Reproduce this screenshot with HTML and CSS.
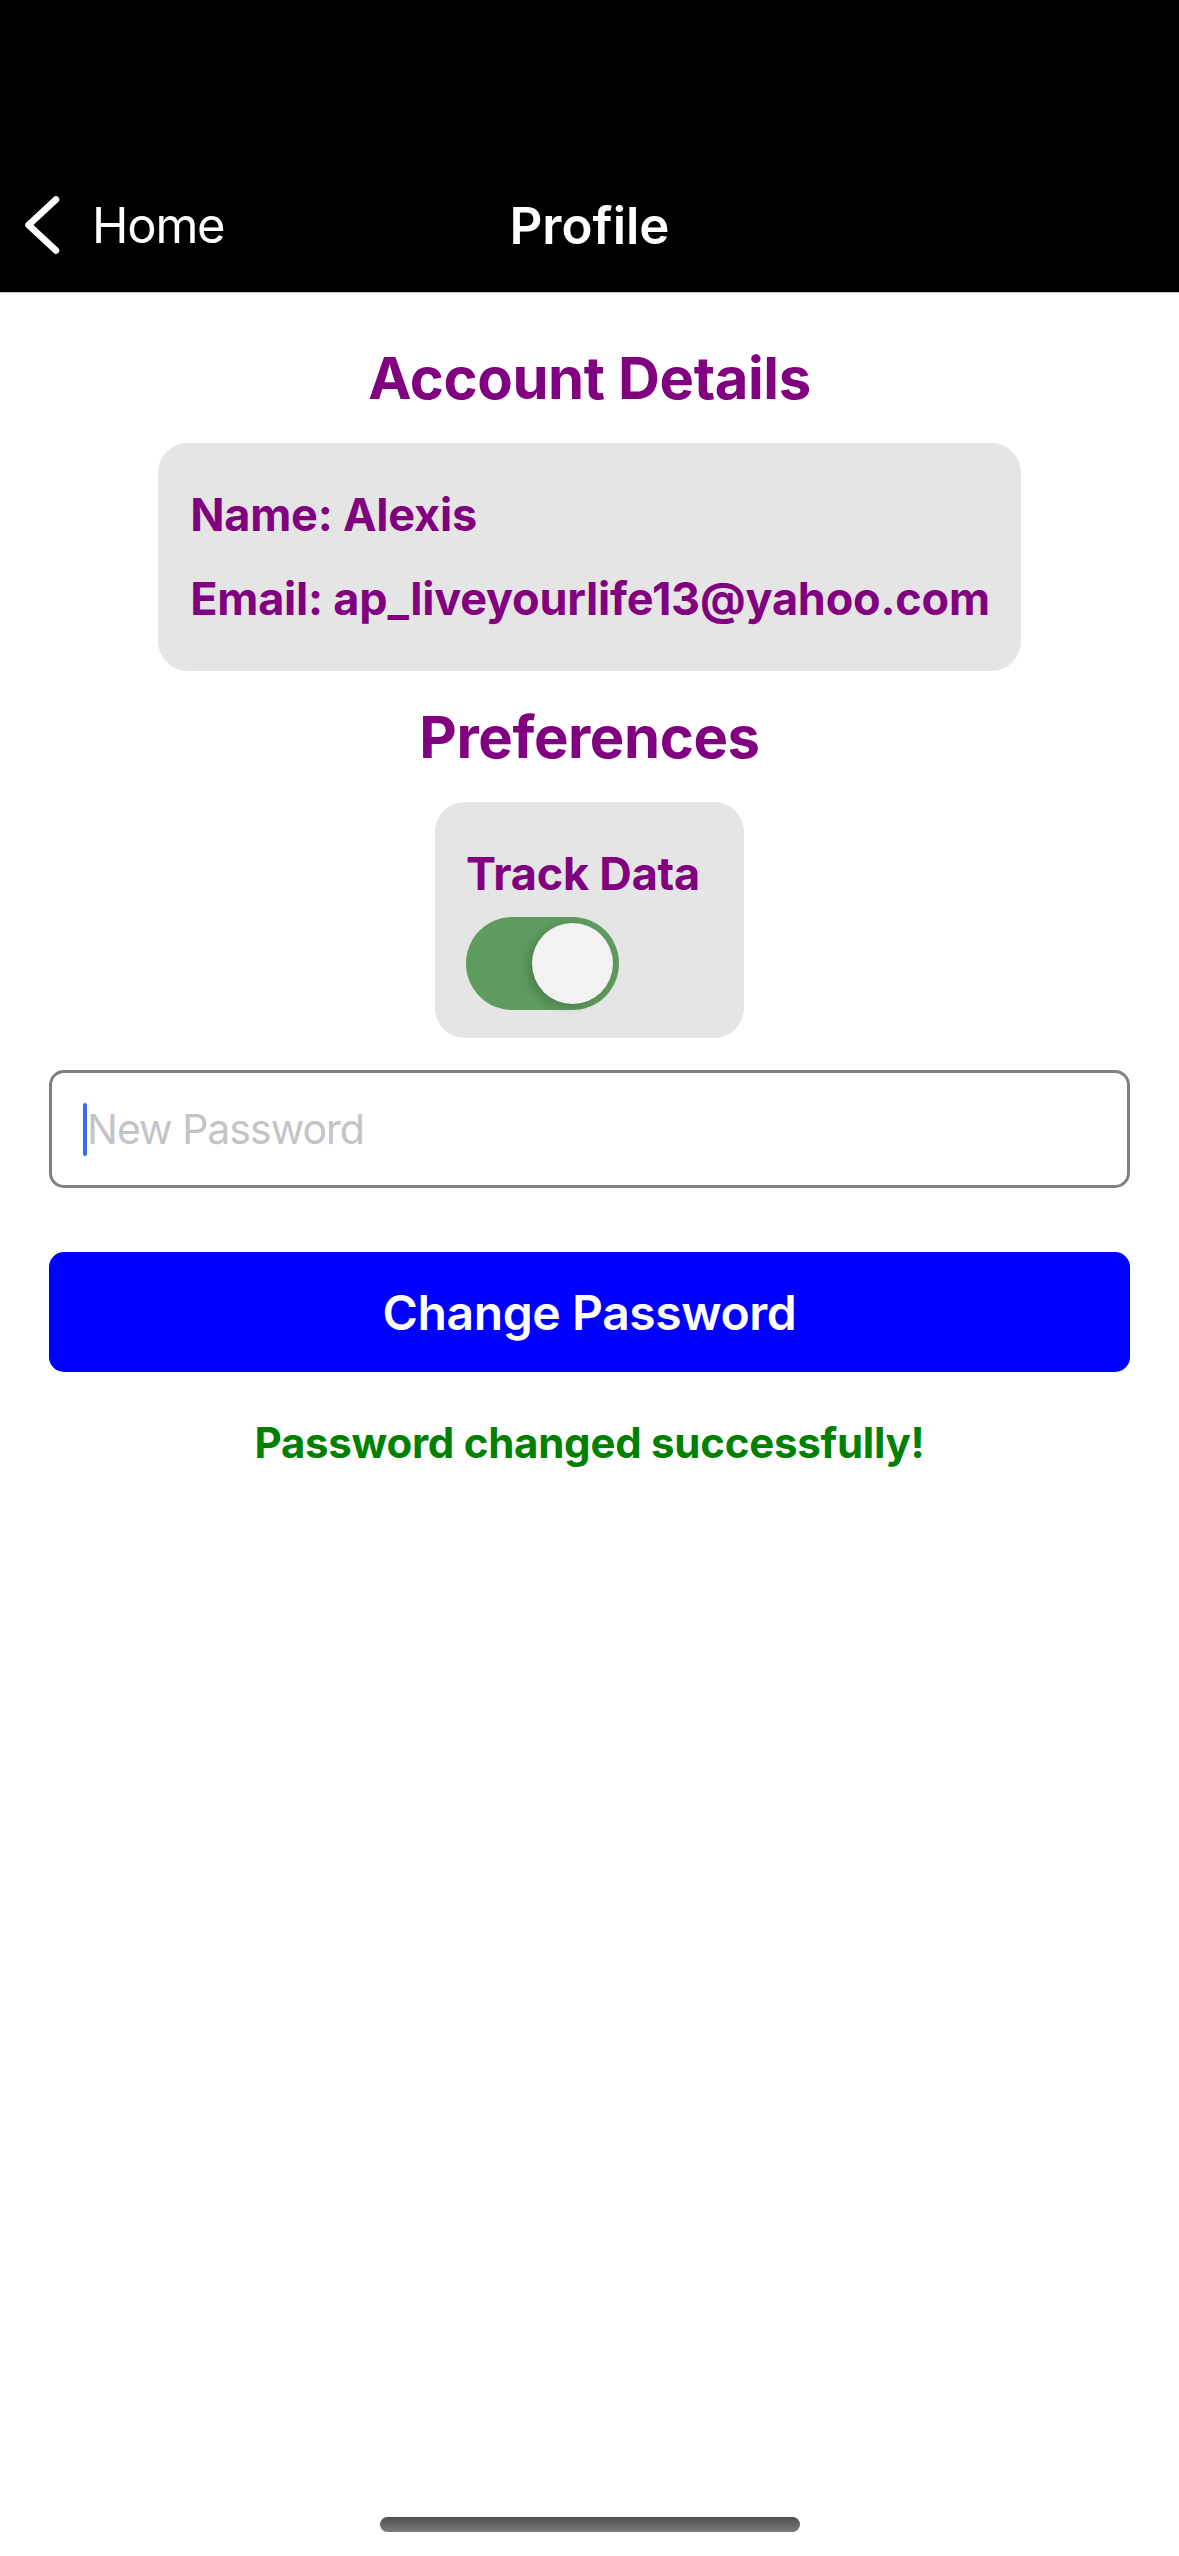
FILE: index.html
```html
<!DOCTYPE html>
<html>
<head>
<meta charset="utf-8">
<link rel="stylesheet" href="styles.css">
</head>
<body>
<header class="topbar">
  <nav class="navbar">
    <div class="nav-left">
      <svg class="chevron" width="40" height="60" viewBox="0 0 40 60">
        <path d="M33 3.5 L5.5 29 L33 54.5" fill="none" stroke="#fff" stroke-width="6.5" stroke-linecap="round" stroke-linejoin="round"/>
      </svg>
      <span class="back-label">Home</span>
    </div>
    <div class="nav-title">Profile</div>
    <div class="nav-right"></div>
  </nav>
</header>
<main class="content">
  <h1 class="section-title">Account Details</h1>
  <div class="card details">
    <p class="info">Name: Alexis</p>
    <p class="info">Email: ap_liveyourlife13@yahoo.com</p>
  </div>
  <h2 class="section-title pref">Preferences</h2>
  <div class="card prefs">
    <p class="info">Track Data</p>
    <div class="switch"><div class="knob"></div></div>
  </div>
  <div class="field">
    <span class="caret"></span>
    <span class="placeholder">New Password</span>
  </div>
  <button class="primary">Change Password</button>
  <p class="success">Password changed successfully!</p>
</main>
<div class="home-indicator"></div>
</body>
</html>
```
FILE: styles.css
```css
html, body {
  margin: 0;
  padding: 0;
  background: #fff;
}
body {
  width: 1179px;
  height: 2556px;
  position: relative;
  font-family: Inter, "Noto Sans", sans-serif;
  overflow: hidden;
}
.topbar {
  background: #000;
  height: 292px;
  border-bottom: 1px solid #c6c6c8;
  display: flex;
  flex-direction: column;
  justify-content: flex-end;
}
.navbar {
  height: 132px;
  display: grid;
  grid-template-columns: 1fr auto 1fr;
  align-items: center;
}
.nav-left {
  display: flex;
  align-items: center;
  padding-left: 23px;
  gap: 29px;
}
.chevron {
  display: block;
}
.back-label {
  color: #fff;
  font-size: 49px;
  line-height: 60px;
  font-weight: 400;
  letter-spacing: -1.2px;
}
.nav-title {
  color: #fff;
  font-size: 51px;
  line-height: 60px;
  font-weight: 600;
}
.content {
  display: flex;
  flex-direction: column;
  align-items: center;
  padding: 0 49px;
}
.section-title {
  margin: 49px 0 0;
  color: #800080;
  font-size: 58px;
  line-height: 72px;
  font-weight: 700;
  letter-spacing: -0.4px;
}
.section-title.pref {
  margin-top: 30px;
}
.card {
  background: #e5e5e5;
  border-radius: 30px;
  display: flex;
  flex-direction: column;
  margin-top: 29px;
}
.details {
  padding: 45px 31px 45px 32px;
  gap: 30px;
}
.info {
  margin: 0;
  color: #800080;
  font-size: 45px;
  line-height: 54px;
  font-weight: 700;
  letter-spacing: -0.2px;
}
.prefs {
  padding: 45px 44px 28px 31px;
  gap: 16px;
}
.switch {
  width: 153px;
  height: 93px;
  border-radius: 47px;
  background: #5e9b5e;
  display: flex;
  justify-content: flex-end;
  align-items: center;
  padding: 0 6px;
  box-sizing: border-box;
}
.knob {
  width: 81px;
  height: 81px;
  border-radius: 50%;
  background: #f2f2f2;
  box-shadow: -4px 3px 10px rgba(0,0,0,0.18);
}
.field {
  align-self: stretch;
  margin-top: 32px;
  height: 118px;
  border: 3px solid #808080;
  border-radius: 15px;
  box-sizing: border-box;
  display: flex;
  align-items: center;
  padding-left: 31px;
}
.caret {
  width: 4px;
  height: 53px;
  border-radius: 2px;
  background: #3a6af5;
}
.placeholder {
  color: #c4c4c7;
  font-size: 41px;
  line-height: 54px;
  letter-spacing: -1px;
}
.primary {
  align-self: stretch;
  margin-top: 64px;
  height: 120px;
  border: none;
  border-radius: 15px;
  background: #0000ff;
  color: #fff;
  font-family: Inter, "Noto Sans", sans-serif;
  font-size: 48px;
  font-weight: 600;
  letter-spacing: -0.4px;
}
.success {
  margin: 46px 0 0;
  color: #008000;
  font-size: 42px;
  line-height: 50px;
  font-weight: 700;
  letter-spacing: -0.25px;
}
.home-indicator {
  position: absolute;
  left: 380px;
  top: 2517px;
  width: 420px;
  height: 15px;
  border-radius: 8px;
  background: linear-gradient(#505050, #7a7a7a);
}
```
